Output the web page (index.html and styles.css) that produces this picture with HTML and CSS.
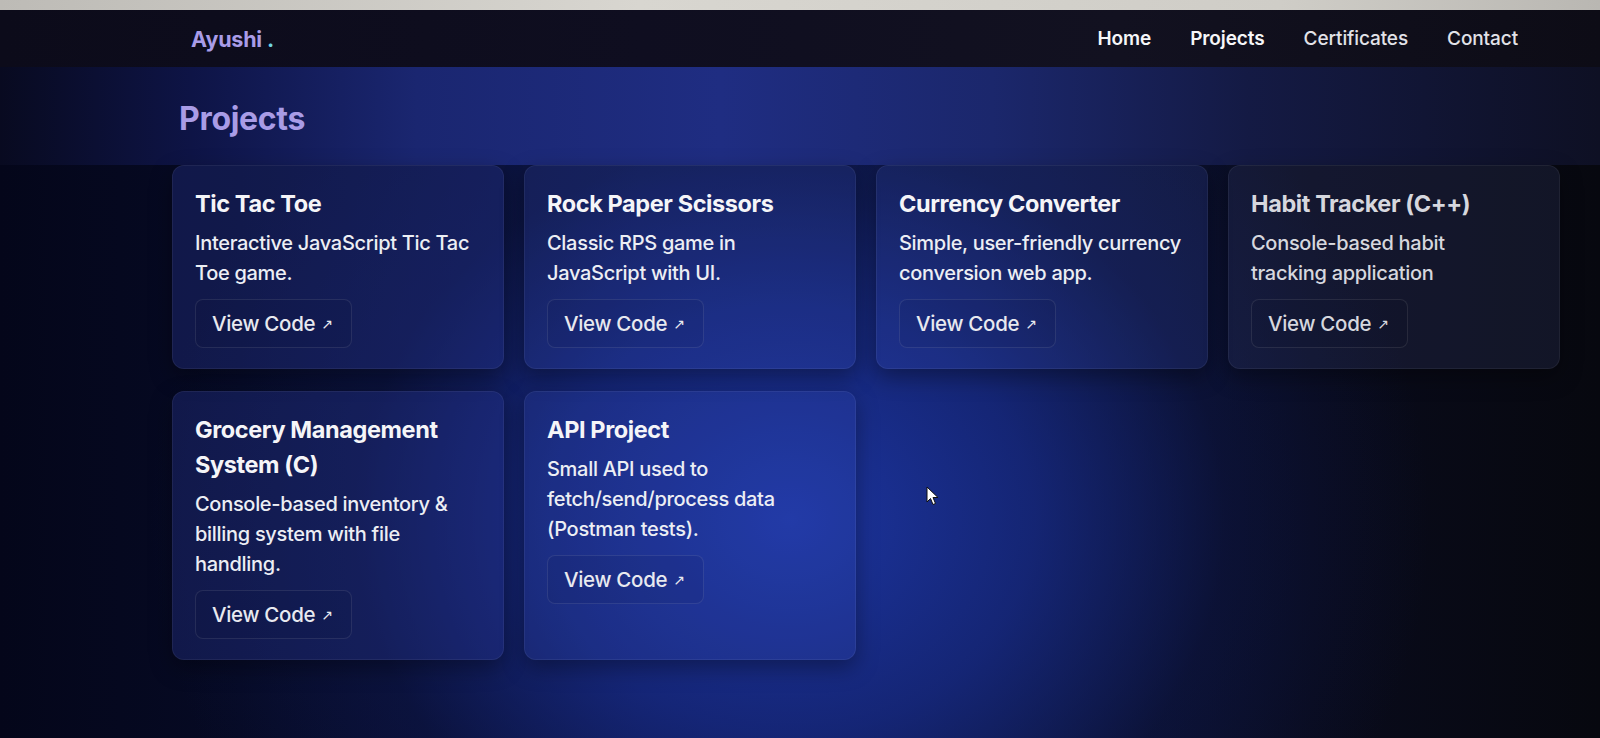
FILE: index.html
```html
<!DOCTYPE html>
<html lang="en">
<head>
<meta charset="utf-8">
<title>Ayushi — Projects</title>
<link rel="stylesheet" href="styles.css">
</head>
<body>
<div class="bezel"></div>
<header class="nav">
  <div class="logo">Ayushi <span class="dot">.</span></div>
  <nav class="links">
    <a href="#" class="link strong">Home</a>
    <a href="#" class="link strong">Projects</a>
    <a href="#" class="link">Certificates</a>
    <a href="#" class="link">Contact</a>
  </nav>
</header>
<main class="page">
  <div class="band">
    <h1 class="title">Projects</h1>
  </div>
  <section class="grid">
    <article class="card c1">
      <h2 class="card-title">Tic Tac Toe</h2>
      <p class="card-desc">Interactive JavaScript Tic Tac Toe game.</p>
      <a href="#" class="btn">View Code <span class="arrow">↗</span></a>
    </article>
    <article class="card c2">
      <h2 class="card-title">Rock Paper Scissors</h2>
      <p class="card-desc">Classic RPS game in JavaScript with UI.</p>
      <a href="#" class="btn">View Code <span class="arrow">↗</span></a>
    </article>
    <article class="card c3">
      <h2 class="card-title">Currency Converter</h2>
      <p class="card-desc">Simple, user-friendly currency conversion web app.</p>
      <a href="#" class="btn">View Code <span class="arrow">↗</span></a>
    </article>
    <article class="card c4">
      <h2 class="card-title">Habit Tracker (C++)</h2>
      <p class="card-desc">Console-based habit tracking application</p>
      <a href="#" class="btn">View Code <span class="arrow">↗</span></a>
    </article>
    <article class="card c5">
      <h2 class="card-title">Grocery Management System (C)</h2>
      <p class="card-desc">Console-based inventory &amp; billing system with file handling.</p>
      <a href="#" class="btn">View Code <span class="arrow">↗</span></a>
    </article>
    <article class="card c6">
      <h2 class="card-title">API Project</h2>
      <p class="card-desc">Small API used to fetch/send/process data (Postman tests).</p>
      <a href="#" class="btn">View Code <span class="arrow">↗</span></a>
    </article>
  </section>
  <svg class="cursor" width="14" height="20" viewBox="0 0 14 20" aria-hidden="true">
    <path d="M1 1 L1 16 L4.5 12.5 L7 18.5 L9.5 17.5 L7 11.5 L12 11.5 Z" fill="#ffffff" stroke="#111" stroke-width="1"/>
  </svg>
</main>
</body>
</html>
```

FILE: styles.css
```css
* { box-sizing: border-box; }
html, body { margin: 0; padding: 0; }
body {
  width: 1600px;
  height: 738px;
  overflow: hidden;
  font-family: "Inter", "Noto Sans", sans-serif;
  color: #eef0f6;
  background:
    radial-gradient(ellipse 640px 560px at 790px 520px, rgba(30, 56, 170, 0.9) 0%, rgba(24, 44, 140, 0.72) 38%, rgba(14, 24, 80, 0.4) 68%, rgba(0, 0, 0, 0) 100%),
    linear-gradient(90deg, #04061a 0%, #060a24 15%, #0d1542 40%, #0c1438 62%, #090b1c 82%, #07080f 100%);
}
.bezel {
  height: 10px;
  background: linear-gradient(90deg, #bdbbb6, #d8d6d0 40%, #cfcdc7 80%, #b9b7b2);
}
.nav {
  height: 57px;
  display: flex;
  align-items: center;
  justify-content: space-between;
  padding: 0 82px 0 191px;
  background: linear-gradient(90deg, #0c0b1a 0%, #0f0e20 40%, #121120 70%, #0d0c16 100%);
}
.logo {
  font-weight: 700;
  font-size: 21.5px;
  color: #a99ce8;
  letter-spacing: -0.2px;
}
.dot { color: #6fd6e6; }
.links {
  display: flex;
  gap: 39px;
}
.link {
  color: #e2e2e8;
  text-decoration: none;
  font-size: 19px;
  font-weight: 500;
  letter-spacing: -0.1px;
}
.link.strong { color: #f6f6f8; font-weight: 600; }
.page {
  position: relative;
}
.band {
  height: 98px;
  display: flex;
  align-items: center;
  padding-left: 179px;
  padding-top: 4px;
  background: linear-gradient(90deg, #080a20 0%, #0e1446 12%, #1a2670 26%, #1f2d82 45%, #1b276c 62%, #141a44 78%, #0e1024 100%);
}
.title {
  margin: 0;
  font-size: 32px;
  font-weight: 700;
  color: #a99ce6;
  letter-spacing: -0.3px;
}
.grid {
  display: grid;
  grid-template-columns: repeat(4, 332px);
  gap: 22px 20px;
  padding-left: 172px;
  align-items: stretch;
}
.card {
  display: flex;
  flex-direction: column;
  align-items: flex-start;
  padding: 20px 20px 20px 22px;
  border-radius: 12px;
  background: rgba(70, 95, 210, 0.16);
  border: 1px solid rgba(255, 255, 255, 0.06);
  box-shadow: 0 8px 22px rgba(0, 0, 0, 0.35);
}
.c1 { background: rgba(40, 55, 150, 0.35); }
.c4 { background: rgba(60, 70, 120, 0.22); }
.c5 { background: rgba(40, 55, 150, 0.35); }
.card-title {
  margin: 0;
  font-size: 23.5px;
  line-height: 35px;
  font-weight: 700;
  color: #f5f5f8;
  letter-spacing: -0.4px;
}
.card-desc {
  margin: 7px 0 0;
  font-size: 20px;
  line-height: 30px;
  font-weight: 500;
  color: #eceef4;
  letter-spacing: -0.3px;
}
.c4 .card-desc { max-width: 250px; }
.btn {
  margin-top: 11px;
  display: inline-flex;
  align-items: center;
  gap: 6px;
  padding: 0 18px 0 16px;
  height: 49px;
  border-radius: 8px;
  border: 1px solid rgba(255, 255, 255, 0.09);
  background: rgba(0, 0, 20, 0.06);
  color: #e8e9ef;
  text-decoration: none;
  font-size: 20.5px;
  font-weight: 500;
  letter-spacing: -0.3px;
}
.arrow {
  font-family: "DejaVu Sans", sans-serif;
  font-size: 14px;
}
.c4 .card-title, .c4 .card-desc, .c4 .btn { color: #d6d7de; }
.cursor {
  position: absolute;
  left: 926px;
  top: 419px;
}
```
